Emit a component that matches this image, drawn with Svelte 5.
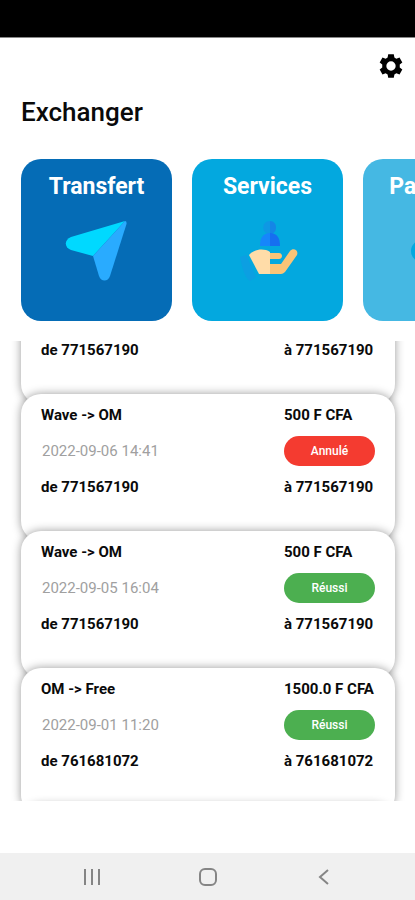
<script lang="ts">
  import { onMount } from 'svelte';

  type Transaction = {
      route: string;
      amount: string;
      date: string;
      status: string;
      from: string;
      to: string;
  };

  let list: HTMLElement;

  const transactions: Transaction[] = [
      { route: 'Wave -> OM', amount: '500 F CFA', date: '2022-09-06 14:43', status: 'Réussi', from: '771567190', to: '771567190' },
      { route: 'Wave -> OM', amount: '500 F CFA', date: '2022-09-06 14:41', status: 'Annulé', from: '771567190', to: '771567190' },
      { route: 'Wave -> OM', amount: '500 F CFA', date: '2022-09-05 16:04', status: 'Réussi', from: '771567190', to: '771567190' },
      { route: 'OM -> Free', amount: '1500.0 F CFA', date: '2022-09-01 11:20', status: 'Réussi', from: '761681072', to: '761681072' },
      { route: 'OM -> Free', amount: '500 F CFA', date: '2022-09-01 11:12', status: 'Réussi', from: '761681072', to: '761681072' }
  ];

  onMount(() => {
      list.scrollTop = 84;
  });
</script>

<div class="screen">
  <div class="status-bar"></div>

  <header>
      <button class="settings" type="button" aria-label="Paramètres">
          <svg viewBox="0 0 24 24" width="28" height="28">
              <path fill="#000" fill-rule="evenodd" d="M9.6 2h4.8l.5 2.8 1.700 1 2.700-1 2.400 4.100-2.200 1.900v2.400l2.200 1.900-2.400 4.100-2.700-1-1.700 1-.5 2.800H9.600l-.5-2.800-1.700-1-2.700 1-2.400-4.100 2.200-1.900v-2.400L2.300 8.900l2.400-4.100 2.700 1 1.700-1zM12 8a4 4 0 1 0 0 8a4 4 0 1 0 0-8z" />
          </svg>
      </button>
      <h1>Exchanger</h1>
  </header>

  <div class="tiles">
      <button class="tile transfer" type="button">
          <span>Transfert</span>
          <svg viewBox="0 0 64 64" width="64" height="64">
              <path fill="#00d9ff" d="M60 2 6 18C-1 21-1 28 6 31l22 6z" />
              <path fill="#29abff" d="M60 2Q62 2 61.500 5L45 57c-2 6-9 6-11 0l-6-20z" />
          </svg>
      </button>
      <button class="tile services" type="button">
          <span>Services</span>
          <svg viewBox="0 0 64 64" width="64" height="64">
              <path fill="#0c9fe2" d="m4 38 6-2 10 22-6 4C8 58 6 47 4 38z" />
              <path fill="#0e98e4" d="M34 2c-9 0-9 13 0 13z" />
              <path fill="#1585e6" d="M34 2c8 0 8 13 0 13z" />
              <path fill="#1686fb" d="M34 14c-7 0-10 5-10 13h10z" />
              <path fill="#166ff0" d="M34 14c7 0 10 5 10 13H34z" />
              <path fill="#ffdca8" d="M34 33c-6-4-16-3-21 3l10 19h11z" />
              <path fill="#fac477" d="M34 34h9c4 0 4 6 0 6h-9v5h11l9-13c3-4 9-1 7 4L49 53q-2 2-4 2H34z" />
          </svg>
      </button>
      <button class="tile payment" type="button">
          <span>Paiement</span>
          <svg viewBox="0 0 64 64" width="64" height="64">
              <circle cx="15" cy="32" r="11" fill="#03a8df" />
              <circle cx="49" cy="32" r="11" fill="#03a8df" />
              <path fill="#03a8df" d="M15 27h34v10H15z" />
          </svg>
      </button>
  </div>

  <main class="list" bind:this={list}>
      {#each transactions as t}
          <article class="card">
              <strong>{t.route}</strong>
              <strong>{t.amount}</strong>
              <time>{t.date}</time>
              <span class="status" class:cancelled={t.status === 'Annulé'}>{t.status}</span>
              <strong>de {t.from}</strong>
              <strong>à {t.to}</strong>
          </article>
      {/each}
  </main>

  <nav>
      <button type="button" aria-label="Applications récentes">
          <svg viewBox="0 0 20 20" width="20" height="20">
              <path d="M3 2v16M10 2v16M17 2v16" />
          </svg>
      </button>
      <button type="button" aria-label="Accueil">
          <svg viewBox="0 0 20 20" width="20" height="20">
              <rect x="2" y="2" width="16" height="16" rx="5" />
          </svg>
      </button>
      <button type="button" aria-label="Retour">
          <svg viewBox="0 0 20 20" width="20" height="20">
              <path d="M14 3 6 10l8 7" />
          </svg>
      </button>
  </nav>
</div>

<style>
  :global(body) {
      background-color: #fff;
  }

  .screen {
      display: flex;
      flex-direction: column;
      height: 100vh;
      font-family: Roboto, 'Open Sans', sans-serif;
      color: #0a0a0a;
  }

  button {
      padding: 0;
      border: none;
      background: none;
      font-family: inherit;
      cursor: pointer;
  }

  svg {
      display: block;
  }

  .status-bar {
      flex: none;
      height: 37px;
      background-color: #000;
      border-bottom: 1px solid #888;
  }

  header {
      display: flex;
      flex-direction: column;
      padding: 14px 10px 0 21px;
  }

  .settings {
      align-self: flex-end;
  }

  h1 {
      margin: 16px 0 0;
      font-size: 26px;
      line-height: 32px;
      font-weight: 500;
  }

  .tiles {
      flex: none;
      display: flex;
      gap: 20px;
      padding: 31px 21px 20px;
      overflow-x: auto;
      scrollbar-width: none;
  }

  .tile {
      flex: none;
      display: flex;
      flex-direction: column;
      align-items: center;
      gap: 18px;
      width: 151px;
      height: 162px;
      padding-top: 14px;
      border-radius: 20px;
      color: #fff;
      font-size: 23px;
      line-height: 28px;
      font-weight: 700;
  }

  .transfer {
      background-color: #056cb6;
  }

  .services {
      background-color: #03a8df;
  }

  .payment {
      background-color: #45b8e3;
  }

  .list {
      flex: 1;
      min-height: 0;
      margin-bottom: 52px;
      padding: 0 20px 0 21px;
      overflow-y: auto;
      scrollbar-width: none;
  }

  .card {
      display: grid;
      grid-template-columns: 1fr 91px;
      gap: 11px;
      align-items: center;
      padding: 11px 20px 44px;
      border-radius: 20px;
      background-color: #fff;
      box-shadow: 0 0 10px rgba(0, 0, 0, 0.4);
      font-size: 15px;
      line-height: 20px;
      white-space: nowrap;
  }

  .card + .card {
      margin-top: -10px;
  }

  time {
      padding-left: 1px;
      color: #a0a0a0;
      font-weight: 400;
  }

  .status {
      border-radius: 15px;
      background-color: #4caf50;
      color: #fff;
      font-size: 12px;
      line-height: 30px;
      font-weight: 500;
      text-align: center;
  }

  .cancelled {
      background-color: #f43b30;
  }

  nav {
      flex: none;
      display: flex;
      justify-content: center;
      gap: 88px;
      align-items: center;
      height: 47px;
      background-color: #f0f0f0;
  }

  nav button {
      padding: 4px;
  }

  nav svg {
      fill: none;
      stroke: #858585;
      stroke-width: 2;
  }
</style>
